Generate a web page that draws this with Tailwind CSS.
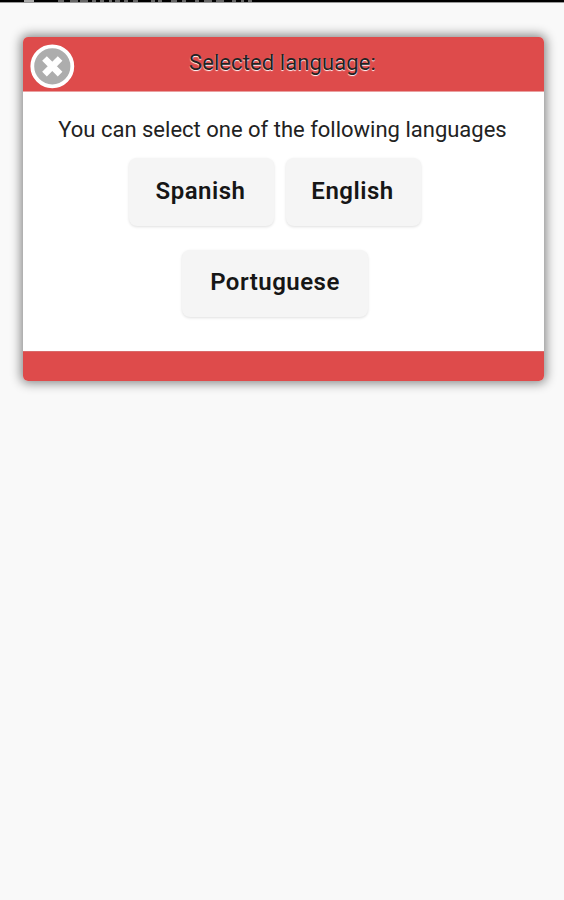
<!DOCTYPE html>
<html lang="en">
<head>
<meta charset="utf-8">
<title>Selected language</title>
<script src="https://cdn.jsdelivr.net/npm/@tailwindcss/browser@4"></script>
</head>
<body class="h-[900px] w-[564px] overflow-hidden bg-[#f9f9f9] font-['Roboto','Liberation_Sans',sans-serif] text-[#161616]">
<div class="h-[3px] border-b border-[#999] bg-black">
<svg class="block" width="260" height="2" viewBox="0 0 260 2" aria-hidden="true"><path d="M24 0h10v2h-10z" fill="#aaa"/><path d="M58 1H64M70 1h8m2 0h8m4 0h4m4 0h4m5 0h3m3 0h5m4 0h4m5 0h5m13 0h4m3 0h4m9 0h6m5 0h4m9 0h4m5 0h8m4 0h8m8 0h4m5 0h3m4 0h4" stroke="#666" stroke-width="2"/></svg>
</div>
<main class="mt-[34px] ml-[23px] flex h-[344px] w-[521px] flex-col overflow-hidden rounded-[5px] bg-white shadow-[0_0_11px_2px_rgba(0,0,0,0.48)]">
<header class="relative flex h-[55px] shrink-0 items-center justify-center border-b border-[#e9a0a0] bg-[#de4b4b]">
<button class="absolute top-[7px] left-[7px]" aria-label="Close"><svg class="block" width="45" height="45" viewBox="0 0 45 45"><circle cx="22.3" cy="22.3" r="20" fill="#adadad" stroke="#fff" stroke-width="3.8"/><path d="M14.5 14.5L30.1 30.1M30.1 14.5L14.5 30.1" stroke="#fff" stroke-width="6.6"/></svg></button>
<h1 class="-mt-[3px] mr-[2px] text-[22px] leading-[30px] tracking-[0.1px] text-[#222] [text-shadow:0_1px_1px_#fff]">Selected language:</h1>
</header>
<section class="flex grow flex-col items-center">
<p class="mt-[23px] mr-[2px] text-[22px] leading-[30px] whitespace-nowrap text-[#222]">You can select one of the following languages</p>
<div class="mt-[13px] mr-[17px] flex gap-[12px]">
<button class="h-[68px] w-[145px] rounded-[8px] bg-[#f5f5f5] pr-[2px] pb-[2px] text-[24px] font-semibold tracking-[0.5px] shadow-[0_1px_3px_rgba(0,0,0,0.13)]">Spanish</button>
<button class="h-[68px] w-[135px] rounded-[8px] bg-[#f5f5f5] pr-[2px] pb-[2px] text-[24px] font-semibold tracking-[0.5px] shadow-[0_1px_3px_rgba(0,0,0,0.13)]">English</button>
</div>
<button class="mt-[24px] mr-[17px] h-[67px] w-[186px] rounded-[8px] bg-[#f5f5f5] pb-[3px] text-[24px] font-semibold tracking-[0.5px] shadow-[0_1px_3px_rgba(0,0,0,0.13)]">Portuguese</button>
</section>
<footer class="h-[30px] shrink-0 border-t border-[#d96a6a] bg-[#de4b4b]"></footer>
</main>
</body>
</html>
